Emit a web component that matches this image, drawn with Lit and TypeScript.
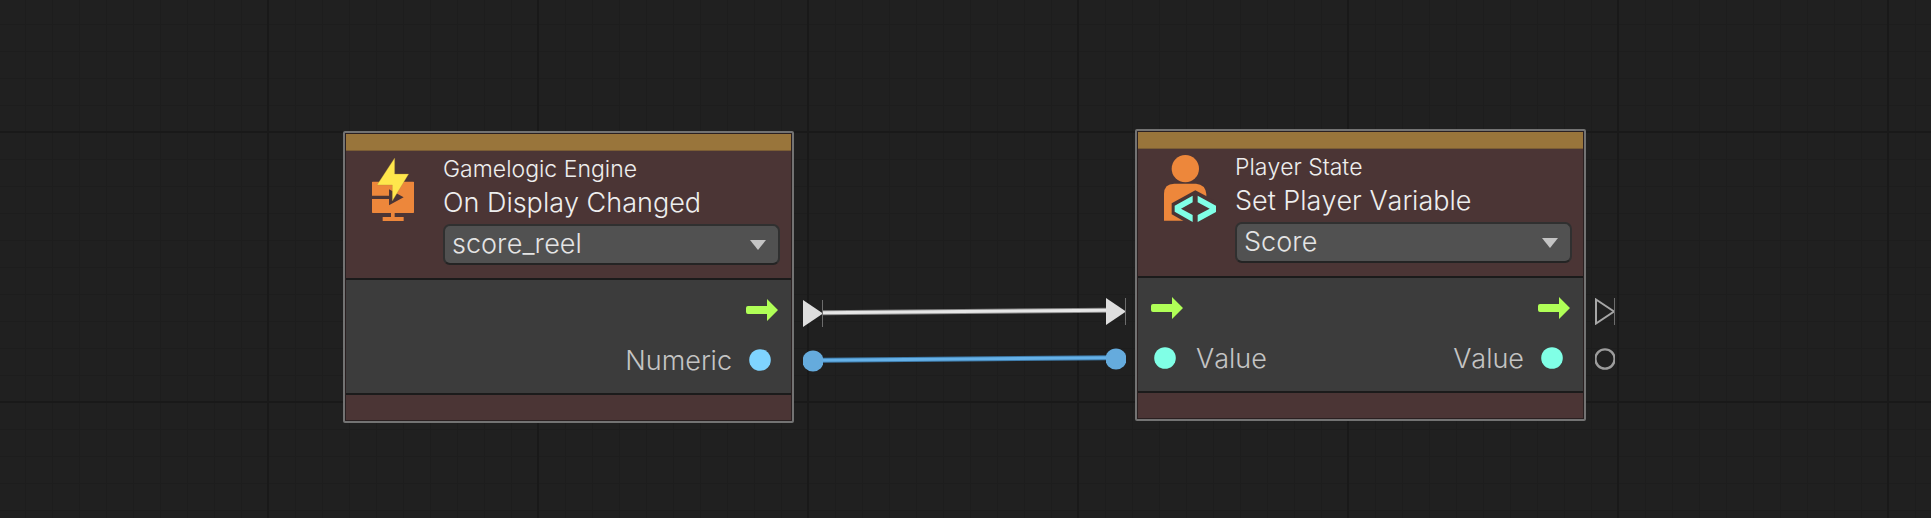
import { LitElement, html, css, svg, nothing } from "lit";
import { customElement, property } from "lit/decorators.js";

type PortKind = "flow" | "value";

interface Port {
  kind: PortKind;
  label?: string;
  color?: string;
  linked: boolean;
}

interface PortRow {
  input?: Port;
  output?: Port;
}

interface GraphNode {
  id: string;
  x: number;
  y: number;
  category: string;
  title: string;
  value: string;
  icon: "display" | "player";
  rows: PortRow[];
}

const NODES: GraphNode[] = [
  {
    id: "display",
    x: 343,
    y: 131,
    category: "Gamelogic Engine",
    title: "On Display Changed",
    value: "score_reel",
    icon: "display",
    rows: [
      { output: { kind: "flow", linked: true } },
      { output: { kind: "value", label: "Numeric", color: "#7fd4ff", linked: true } },
    ],
  },
  {
    id: "player",
    x: 1135,
    y: 129,
    category: "Player State",
    title: "Set Player Variable",
    value: "Score",
    icon: "player",
    rows: [
      { input: { kind: "flow", linked: true }, output: { kind: "flow", linked: false } },
      {
        input: { kind: "value", label: "Value", color: "#80ffe6", linked: true },
        output: { kind: "value", label: "Value", color: "#80ffe6", linked: false },
      },
    ],
  },
];

const displayIcon = svg`
  <path fill="#ed873b" d="M14 80H136Q138 80 138 82V172Q138 174 136 174H80V186H107V198H44V186H69V174H14Q12 174 12 172V82Q12 80 14 80Z"/>
  <path fill="#4b3535" d="M12 122H63V103L107 127L63 151V132H12Z"/>
  <path fill="#ffe74c" stroke="#a98a3a" stroke-width="1" d="M80 9V57H122L73 138V90H27Z"/>
`;

const playerIcon = svg`
  <circle cx="76" cy="47" r="41" fill="#ed873b"/>
  <path fill="#ed873b" d="M12 203V123Q12 92 43 92H108Q136 94 139 123V203Z"/>
  <path fill="#4b3535" d="M106 112L178 150V188L106 224L35 184V151Z"/>
  <path fill="#80ffe6" d="M98 128L44 158V176L98 207V186L63 167L98 148Z"/>
  <path fill="#80ffe6" d="M113 128L168 158V177L113 207V186L149 167L113 148Z"/>
`;

@customElement("graph-socket")
class GraphSocket extends LitElement {
  @property() kind: PortKind = "flow";
  @property({ type: Boolean }) linked = false;

  static styles = css`
    :host { display: block; }
    svg { display: block; }
  `;

  render() {
    if (this.kind === "flow") {
      return html`<svg width="20" height="27" viewBox="0 0 20 27" aria-hidden="true">
        ${this.linked
          ? svg`<path d="M0 0L20 13.5L0 27Z" fill="#dedede"/>`
          : svg`<path d="M1 1.5L19 13.5L1 25.5Z" fill="none" stroke="#a6a6a6" stroke-width="2"/>`}
        <path d="M19.5 0V27" stroke="#6c6c6c" stroke-width="1"/>
      </svg>`;
    }
    return html`<svg width="20" height="22" viewBox="0 0 20 22" aria-hidden="true">
      ${this.linked
        ? svg`<circle cx="10" cy="11" r="10.6" fill="#65abdd"/>`
        : svg`<circle cx="10" cy="11" r="9.6" fill="none" stroke="#9c9c9c" stroke-width="2.4"/>`}
    </svg>`;
  }
}

@customElement("graph-node")
class GraphNodeCard extends LitElement {
  @property({ attribute: false }) node!: GraphNode;

  static styles = css`
    :host { display: block; }
    .card {
      box-sizing: border-box;
      border: 2px solid #737373;
      border-radius: 2px;
      background: #2a2021;
      padding: 1px;
    }
    .stripe { height: 16px; background: #99753b; border-bottom: 1px solid #7b5d35; }
    .header {
      display: flex;
      gap: 15px;
      padding: 4px 11px 13px 22px;
      background: #4b3535;
      border-bottom: 2px solid #1b1b1b;
    }
    .icon { flex: none; width: 60px; height: 70px; }
    .info { flex: 1; min-width: 0; display: flex; flex-direction: column; color: #eeeeee; font-weight: 350; }
    .category { font-size: 23px; line-height: 28px; }
    .title { font-size: 27px; line-height: 34px; margin-top: 3px; }
    .picker { position: relative; display: grid; margin-top: 4px; }
    select {
      appearance: none;
      box-sizing: border-box;
      width: 100%;
      height: 41px;
      margin: 0;
      padding: 0 36px 2px 7px;
      border: 2px solid #303030;
      border-bottom-color: #242424;
      border-radius: 7px;
      background: #515151;
      color: #e4e4e4;
      font: inherit;
      font-kerning: none;
      font-size: 27px;
      font-weight: 300;
      line-height: 34px;
    }
    .caret { position: absolute; right: 14px; top: 16px; pointer-events: none; }
    .ports { padding: 5px 0 8px; background: #3c3c3c; border-bottom: 2px solid #1b1b1b; }
    .row { position: relative; display: flex; justify-content: space-between; height: 50px; }
    .port { display: flex; align-items: center; color: #c4c4c4; font-size: 27px; line-height: 34px; }
    .name { padding-top: 2px; }
    .in { gap: 20px; padding-left: 13px; }
    .out { gap: 17px; flex-direction: row-reverse; padding-right: 13px; margin-left: auto; }
    .glyph { display: block; }
    .in .dot { margin-left: 3px; }
    .out .dot { margin-right: 7px; }
    .socket { position: absolute; top: 15px; }
    .in .socket { left: -32px; }
    .out .socket { right: -32px; }
    .footer { height: 25px; background: #4b3535; }
  `;

  private renderPort(port: Port | undefined, side: "in" | "out") {
    if (!port) return nothing;
    return html`<div class="port ${side}">
      ${port.kind === "flow"
        ? html`<svg class="glyph" width="32" height="22" viewBox="0 0 32 22" aria-hidden="true">
            <path fill="#b0ff57" d="M2 7H21V0L32 11L21 22V15H2Q0 15 0 13V9Q0 7 2 7Z"/>
          </svg>`
        : html`<svg class="glyph dot" width="22" height="22" viewBox="0 0 22 22" aria-hidden="true">
            <circle cx="11" cy="11" r="10.8" fill=${port.color ?? "#fff"} />
          </svg>`}
      ${port.label ? html`<span class="name">${port.label}</span>` : nothing}
      <graph-socket class="socket" kind=${port.kind} ?linked=${port.linked}></graph-socket>
    </div>`;
  }

  render() {
    const n = this.node;
    return html`<article class="card">
      <div class="stripe"></div>
      <div class="header">
        <svg class="icon" viewBox="0 0 180 210" aria-hidden="true">
          ${n.icon === "display" ? displayIcon : playerIcon}
        </svg>
        <div class="info">
          <span class="category">${n.category}</span>
          <label class="title" for="choice">${n.title}</label>
          <div class="picker">
            <select id="choice"><option selected>${n.value}</option></select>
            <svg class="caret" width="16" height="10" viewBox="0 0 16 10" aria-hidden="true">
              <path d="M0 0H16L8 10Z" fill="#c4c4c4"/>
            </svg>
          </div>
        </div>
      </div>
      <div class="ports">
        ${n.rows.map(
          (r) => html`<div class="row">${this.renderPort(r.input, "in")}${this.renderPort(r.output, "out")}</div>`
        )}
      </div>
      <div class="footer"></div>
    </article>`;
  }
}

@customElement("app-root")
class AppRoot extends LitElement {
  static styles = css`
    :host {
      display: block;
      position: relative;
      min-height: 100vh;
      overflow: hidden;
      font-family: Inter, "Liberation Sans", sans-serif;
      font-weight: 300;
      font-kerning: none;
      background-color: #202020;
      background-image:
        linear-gradient(to right, #191919 2px, transparent 2px),
        linear-gradient(to bottom, #191919 2px, transparent 2px),
        linear-gradient(to right, #1d1d1d 1px, transparent 1px),
        linear-gradient(to bottom, #1d1d1d 1px, transparent 1px);
      background-size: 270px 270px, 270px 270px, 27px 27px, 27px 27px;
      background-position: 267px 0, 0 131px, 268px 0, 0 132px;
    }
    .wires { position: absolute; inset: 0; width: 100%; height: 100%; }
    .node { position: absolute; width: 451px; }
  `;

  render() {
    return html`
      <svg class="wires" aria-hidden="true">
        <path d="M822 312.7L1107 310.3" stroke="#8b8b8b" stroke-width="5"/>
        <path d="M822 312.7L1107 310.3" stroke="#e6e6e6" stroke-width="3"/>
        <path d="M822 360.3L1107 357.7" stroke="#3f7cab" stroke-width="5"/>
        <path d="M822 360.3L1107 357.7" stroke="#65b1e8" stroke-width="3"/>
      </svg>
      ${NODES.map(
        (n) => html`<graph-node class="node" style="left:${n.x}px;top:${n.y}px" .node=${n}></graph-node>`
      )}
    `;
  }
}
